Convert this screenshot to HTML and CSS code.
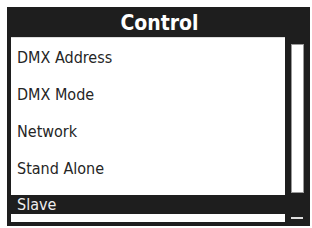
FILE: index.html
```html
<!DOCTYPE html>
<html lang="en">
<head>
    <title>Control</title>
    <meta charset="UTF-8">
    <link rel="stylesheet" href="styles.css">
</head>
<body>
    <div class="ecran">
        <div class="titre">Control</div>
        <div class="corps">
            <div class="liste">
                <div class="item">DMX Address</div>
                <div class="item">DMX Mode</div>
                <div class="item">Network</div>
                <div class="item">Stand Alone</div>
                <div class="item actif">Slave</div>
            </div>
            <div class="scroll">
                <div class="piste"></div>
                <div class="tiret"></div>
            </div>
        </div>
    </div>
</body>
</html>
```

FILE: styles.css
```css
body {
    margin: 0;
    background: #fff;
    font-family: "DejaVu Sans Condensed", "DejaVu Sans", sans-serif;
    font-stretch: condensed;
}

.ecran {
    margin: 7px 0 0 7px;
    width: 303px;
    height: 219px;
    background: #1e1e1e;
    display: flex;
    flex-direction: column;
}

/****** TITRE ******/
.titre {
    height: 30px;
    line-height: 32px;
    text-align: center;
    color: #fff;
    font-size: 21px;
    font-weight: bold;
    padding-left: 2px;
}

/****** LISTE + SCROLL ******/
.corps {
    flex: 1;
    display: flex;
    padding: 0 0 4px 4px;
}
.liste {
    width: 274px;
    background: #fff;
    padding-top: 1px;
    border-top: 1px solid #ddd;
}
.item {
    height: 37px;
    line-height: 38px;
    padding-left: 6px;
    font-size: 16px;
    color: #252525;
}
.actif {
    height: 19px;
    line-height: 19px;
    margin-top: 8px;
    margin-left: -1px;
    padding-left: 7px;
    background: #1e1e1e;
    color: #eee;
}
.scroll {
    flex: 1;
    display: flex;
    flex-direction: column;
    align-items: center;
    padding: 7px 6px 0 5px;
}
.piste {
    width: 11px;
    height: 147px;
    background: #fff;
    border: 1px solid #999;
}
.tiret {
    width: 12px;
    height: 2px;
    margin-top: 24px;
    background: #ddd;
}
```
